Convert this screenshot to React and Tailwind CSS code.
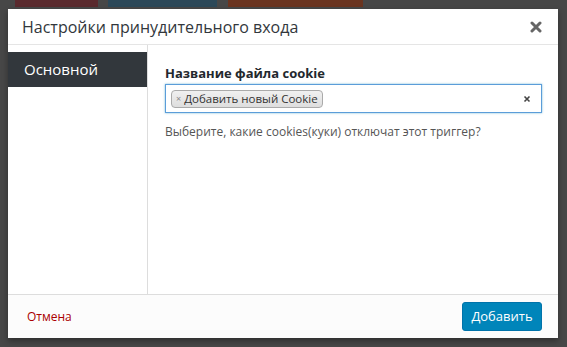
export default function App() {
  return (
    <div
      className="w-[567px] h-[347px] bg-[#474747] flex flex-col overflow-hidden"
      style={{ fontFamily: '"Open Sans", "Noto Sans", sans-serif' }}
    >
      {/* Background toolbar strips behind the overlay */}
      <div className="h-[9px] flex items-start shrink-0">
        <div className="w-[8px] h-[9px]" />
        <div className="ml-[7px] w-[83px] h-[7px] bg-[#5a2a2e]" />
        <div className="ml-[10px] w-[109px] h-[7px] bg-[#2c4858]" />
        <div className="ml-[11px] w-[135px] h-[7px] bg-[#6a3420]" />
      </div>

      {/* Modal */}
      <div className="ml-[8px] w-[550px] h-[329px] bg-white flex flex-col shadow-[0_3px_6px_rgba(0,0,0,0.35)]">
        <div className="h-[36px] flex items-center justify-between pl-[14px] pr-[16px] border-b border-[#e5e5e5] shrink-0">
          <h1 className="text-[16px] text-[#32373c] leading-none">Настройки принудительного входа</h1>
          <svg width="12" height="12" viewBox="0 0 12 12">
            <path d="M2 2 L10 10 M10 2 L2 10" stroke="#666" strokeWidth="3" strokeLinecap="round" />
          </svg>
        </div>

        <div className="flex flex-1">
          <div className="w-[140px] border-r border-[#ddd] pt-[7px]">
            <div className="h-[35px] bg-[#32373c] text-white text-[15px] flex items-center pl-[16px]">
              Основной
            </div>
          </div>
          <div className="flex-1 pl-[17px] pr-[16px] pt-[19px]">
            <div className="text-[13px] font-bold text-[#23282d] leading-[18px]">Название файла cookie</div>
            <div className="mt-[2px] h-[29px] border border-[#5b9dd9] shadow-[0_0_2px_rgba(30,140,190,0.6)] flex items-center justify-between pl-[5px] pr-[10px]">
              <div className="h-[18px] px-[4px] flex items-center gap-[3px] border border-[#aaa] rounded-[4px] bg-gradient-to-b from-[#f0f0f0] to-[#dedede] text-[11.5px] text-[#333]">
                <span className="text-[9px] text-[#888] leading-none">×</span>
                <span className="leading-none">Добавить новый Cookie</span>
              </div>
              <svg width="8" height="8" viewBox="0 0 8 8">
                <path d="M1.5 1.5 L6.5 6.5 M6.5 1.5 L1.5 6.5" stroke="#444" strokeWidth="1.6" />
              </svg>
            </div>
            <p className="mt-[10px] text-[12px] text-[#555]">Выберите, какие cookies(куки) отключат этот триггер?</p>
          </div>
        </div>

        <div className="h-[44px] border-t border-[#ddd] bg-[#fcfcfc] flex items-center justify-between pl-[19px] pr-[16px] shrink-0">
          <span className="text-[12px] text-[#a00]">Отмена</span>
          <button className="w-[80px] h-[29px] rounded-[3px] bg-[#0085ba] border border-[#0073aa] text-white text-[13px]">
            Добавить
          </button>
        </div>
      </div>
    </div>
  );
}
